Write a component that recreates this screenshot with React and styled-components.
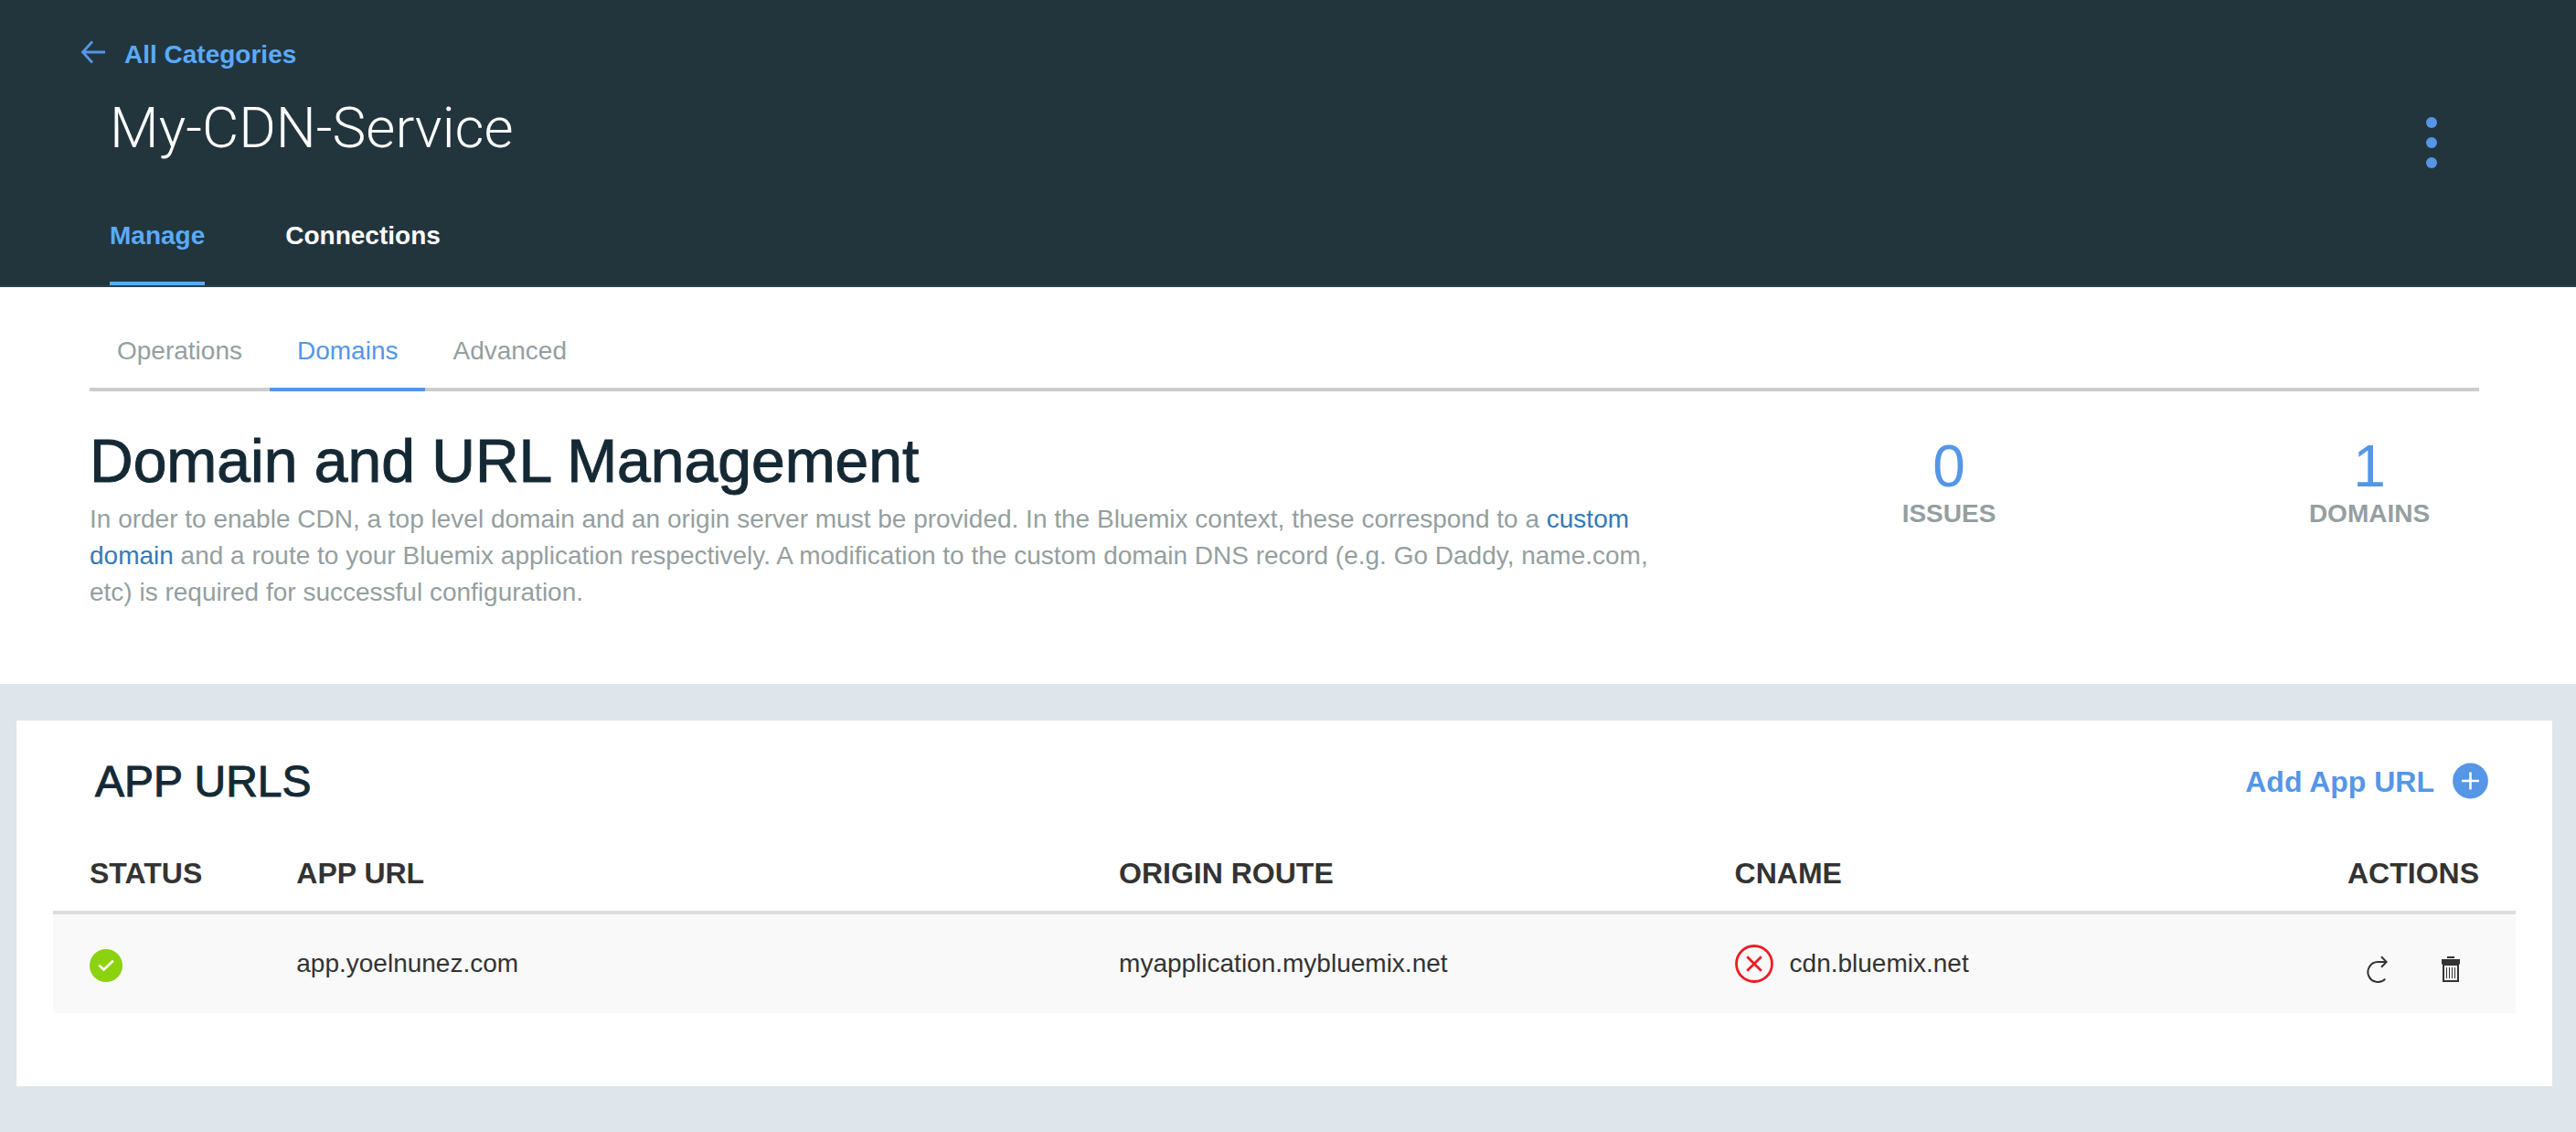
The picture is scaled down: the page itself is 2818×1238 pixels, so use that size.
import React from "react";
import styled, { createGlobalStyle } from "styled-components";

const colors = {
  header: "#22353d",
  headerEdge: "#2d3f49",
  brightBlue: "#5aaafa",
  blue: "#5596e6",
  link: "#337ab7",
  muted: "#959f9f",
  ink: "#152935",
  text: "#333333",
  rule: "#cccccc",
  canvas: "#dee5eb",
  ok: "#8cd211",
  error: "#ed1c24",
};

const GlobalStyle = createGlobalStyle`
  *, *::before, *::after { box-sizing: border-box; }
  body {
    margin: 0;
    background: ${colors.canvas};
    color: ${colors.text};
    font-family: "Liberation Sans", Arial, sans-serif;
    font-size: 28px;
    line-height: 40px;
  }
  h1, h2, p, ul, dl, dd { margin: 0; padding: 0; }
  a { text-decoration: none; }
  svg { display: block; flex: none; overflow: visible; }
`;

const ServiceHeader = styled.header`
  padding: 40px 144px 0 120px;
  background: ${colors.header};
  border-bottom: 2px solid ${colors.headerEdge};
`;

const BackLink = styled.a`
  display: flex;
  align-items: flex-start;
  gap: 20px;
  width: fit-content;
  margin-left: -32px;
  color: ${colors.brightBlue};
  font-weight: 700;
`;

const TitleRow = styled.div`
  display: flex;
  justify-content: space-between;
  align-items: flex-start;
  min-height: 84px;
  margin-top: 20px;
`;

const ServiceName = styled.h1`
  color: #ffffff;
  font-family: Roboto, "Liberation Sans", sans-serif;
  font-size: 62px;
  font-weight: 300;
  line-height: 80px;
`;

const IconButton = styled.button`
  display: flex;
  align-items: center;
  justify-content: center;
  padding: 0;
  border: 0;
  background: none;
  color: inherit;
  cursor: pointer;
`;

const MenuButton = styled(IconButton)`
  align-self: flex-end;
  width: 28px;
  height: 56px;
  color: ${colors.blue};
`;

const MainNav = styled.nav`
  display: flex;
  gap: 88px;
  margin-top: 54px;
`;

const MainNavLink = styled.a`
  padding-bottom: 30px;
  border-bottom: 4px solid ${(p) => (p.$active ? colors.brightBlue : "transparent")};
  color: ${(p) => (p.$active ? colors.brightBlue : "#ffffff")};
  font-weight: 700;
`;

const Overview = styled.section`
  padding: 50px 106px 80px 98px;
  background: #ffffff;
`;

const SubNav = styled.nav`
  display: flex;
  box-shadow: inset 0 -4px ${colors.rule};
`;

const SubNavLink = styled.a`
  padding: 0 30px 20px;
  border-bottom: 4px solid ${(p) => (p.$active ? colors.blue : "transparent")};
  color: ${(p) => (p.$active ? colors.blue : colors.muted)};
`;

const Summary = styled.div`
  display: flex;
  justify-content: space-between;
  align-items: flex-start;
  gap: 60px;
  margin-top: 40px;
`;

const Intro = styled.div`
  flex: 0 1 1756px;
`;

const SectionTitle = styled.h2`
  color: ${colors.ink};
  font-size: 66px;
  font-weight: 400;
  line-height: 72px;
  -webkit-text-stroke: 1px ${colors.ink};
`;

const Description = styled.p`
  margin-top: 8px;
  color: ${colors.muted};
`;

const TextLink = styled.a`
  color: ${colors.link};
`;

const Stats = styled.dl`
  display: flex;
  gap: 220px;
  padding-top: 10px;
`;

const Stat = styled.div`
  display: flex;
  flex-direction: column-reverse;
  width: 240px;
  text-align: center;
`;

const StatLabel = styled.dt`
  color: ${colors.muted};
  font-weight: 700;
`;

const StatValue = styled.dd`
  color: ${colors.blue};
  font-size: 64px;
  line-height: 64px;
`;

const Card = styled.section`
  margin: 40px 26px 50px 18px;
  padding: 36px 40px 80px;
  background: #ffffff;
`;

const CardHeader = styled.div`
  display: flex;
  justify-content: space-between;
  align-items: center;
  padding: 0 30px 0 46px;
`;

const CardTitle = styled.h2`
  color: ${colors.ink};
  font-size: 48px;
  font-weight: 400;
  line-height: 62px;
  -webkit-text-stroke: 1px ${colors.ink};
`;

const AddButton = styled(IconButton)`
  gap: 20px;
  color: ${colors.blue};
  font: 700 32px/40px "Liberation Sans", Arial, sans-serif;
`;

const UrlTable = styled.table`
  width: 100%;
  border-spacing: 0;
  table-layout: fixed;
`;

const HeadCell = styled.th`
  width: ${(p) => p.$width};
  padding: 49px 40px 21px;
  border-bottom: 4px solid #dddddd;
  font-size: 32px;
  line-height: 40px;
  text-align: ${(p) => p.$align || "left"};
`;

const Cell = styled.td`
  height: 108px;
  padding: 34px 40px;
  background: #f9f9f9;
`;

const CellContent = styled.div`
  display: flex;
  align-items: center;
  gap: 18px;
  height: 40px;
`;

const RowActions = styled(CellContent)`
  justify-content: flex-end;
  align-items: flex-end;
  gap: 48px;
  padding-right: 16px;
`;

const RowButton = styled(IconButton)`
  width: 32px;
  height: 32px;
`;

const ArrowLeftIcon = () => (
  <svg width="28" height="34" viewBox="0 0 28 34" fill="none" stroke={colors.blue} strokeWidth="2.8" aria-hidden="true">
    <path d="M27 17H3M13 5.500L2.500 17L13 28.500" />
  </svg>
);

const DotsIcon = () => (
  <svg width="12" height="56" viewBox="0 0 12 56" fill="currentColor" aria-hidden="true">
    <circle cx="6" cy="6" r="6" />
    <circle cx="6" cy="28" r="6" />
    <circle cx="6" cy="50" r="6" />
  </svg>
);

const PlusIcon = () => (
  <svg width="39" height="40" viewBox="0 0 39 40" aria-hidden="true">
    <circle cx="19.500" cy="19" r="19.400" fill={colors.blue} />
    <path d="M19.500 9.500v19M10 19h19" stroke="#ffffff" strokeWidth="2.600" />
  </svg>
);

const CheckIcon = () => (
  <svg width="36" height="40" viewBox="0 0 36 40" role="img" aria-label="Active">
    <circle cx="18" cy="22" r="18" fill={colors.ok} />
    <path d="M10.300 21.500l5.200 5L25.800 16.800" fill="none" stroke="#ffffff" strokeWidth="2.600" />
  </svg>
);

const ErrorIcon = () => (
  <svg width="42" height="42" viewBox="0 0 42 42" fill="none" stroke={colors.error} strokeWidth="2.800" role="img" aria-label="Error">
    <circle cx="21" cy="21" r="19.500" />
    <path d="M13.200 13.200l15.600 15.600M28.800 13.200L13.200 28.800" />
  </svg>
);

const RefreshIcon = () => (
  <svg width="32" height="32" viewBox="0 0 32 32" fill="none" stroke="currentColor" strokeWidth="2" aria-hidden="true">
    <path d="M25.300 28.600A11 11 0 1 1 17 10H26M21 4.300l5.600 5.700L21 15.700" />
  </svg>
);

const TrashIcon = () => (
  <svg width="32" height="32" viewBox="0 0 32 32" fill="currentColor" aria-hidden="true">
    <path d="M13 4h8v2h-8zM7 7h20v5.500h-1v19.500h-18v-19.500h-1zM10 14v16h14v-16z" fillRule="evenodd" />
    <path d="M12.500 16v12M15.500 16v12M18.500 16v12M21.500 16v12" stroke="currentColor" strokeWidth="1" />
  </svg>
);

const tabs = ["Manage", "Connections"];
const subTabs = ["Operations", "Domains", "Advanced"];
const stats = [
  { label: "ISSUES", value: 0 },
  { label: "DOMAINS", value: 1 },
];
const urls = [
  { url: "app.yoelnunez.com", route: "myapplication.mybluemix.net", cname: "cdn.bluemix.net" },
];

export default function App() {
  return (
    <>
      <GlobalStyle />
      <ServiceHeader>
        <BackLink href="#categories">
          <ArrowLeftIcon />
          All Categories
        </BackLink>
        <TitleRow>
          <ServiceName>My-CDN-Service</ServiceName>
          <MenuButton type="button" aria-label="More options">
            <DotsIcon />
          </MenuButton>
        </TitleRow>
        <MainNav>
          {tabs.map((tab) => (
            <MainNavLink key={tab} href={`#${tab}`} $active={tab === "Manage"}>
              {tab}
            </MainNavLink>
          ))}
        </MainNav>
      </ServiceHeader>
      <main>
        <Overview>
          <SubNav>
            {subTabs.map((tab) => (
              <SubNavLink key={tab} href={`#${tab}`} $active={tab === "Domains"}>
                {tab}
              </SubNavLink>
            ))}
          </SubNav>
          <Summary>
            <Intro>
              <SectionTitle>Domain and URL Management</SectionTitle>
              <Description>
                In order to enable CDN, a top level domain and an origin server must be provided. In the Bluemix
                context, these correspond to a <TextLink href="#custom-domain">custom domain</TextLink> and a route to
                your Bluemix application respectively. A modification to the custom domain DNS record (e.g. Go Daddy,
                name.com, etc) is required for successful configuration.
              </Description>
            </Intro>
            <Stats>
              {stats.map((stat) => (
                <Stat key={stat.label}>
                  <StatLabel>{stat.label}</StatLabel>
                  <StatValue>{stat.value}</StatValue>
                </Stat>
              ))}
            </Stats>
          </Summary>
        </Overview>
        <Card>
          <CardHeader>
            <CardTitle>APP URLS</CardTitle>
            <AddButton type="button">
              Add App URL
              <PlusIcon />
            </AddButton>
          </CardHeader>
          <UrlTable>
            <thead>
              <tr>
                <HeadCell $width="8.4%">STATUS</HeadCell>
                <HeadCell $width="33.4%">APP URL</HeadCell>
                <HeadCell $width="25%">ORIGIN ROUTE</HeadCell>
                <HeadCell>CNAME</HeadCell>
                <HeadCell $align="right">ACTIONS</HeadCell>
              </tr>
            </thead>
            <tbody>
              {urls.map((row) => (
                <tr key={row.url}>
                  <Cell>
                    <CellContent>
                      <CheckIcon />
                    </CellContent>
                  </Cell>
                  <Cell>{row.url}</Cell>
                  <Cell>{row.route}</Cell>
                  <Cell>
                    <CellContent>
                      <ErrorIcon />
                      {row.cname}
                    </CellContent>
                  </Cell>
                  <Cell>
                    <RowActions>
                      <RowButton type="button" aria-label="Refresh">
                        <RefreshIcon />
                      </RowButton>
                      <RowButton type="button" aria-label="Delete">
                        <TrashIcon />
                      </RowButton>
                    </RowActions>
                  </Cell>
                </tr>
              ))}
            </tbody>
          </UrlTable>
        </Card>
      </main>
    </>
  );
}
